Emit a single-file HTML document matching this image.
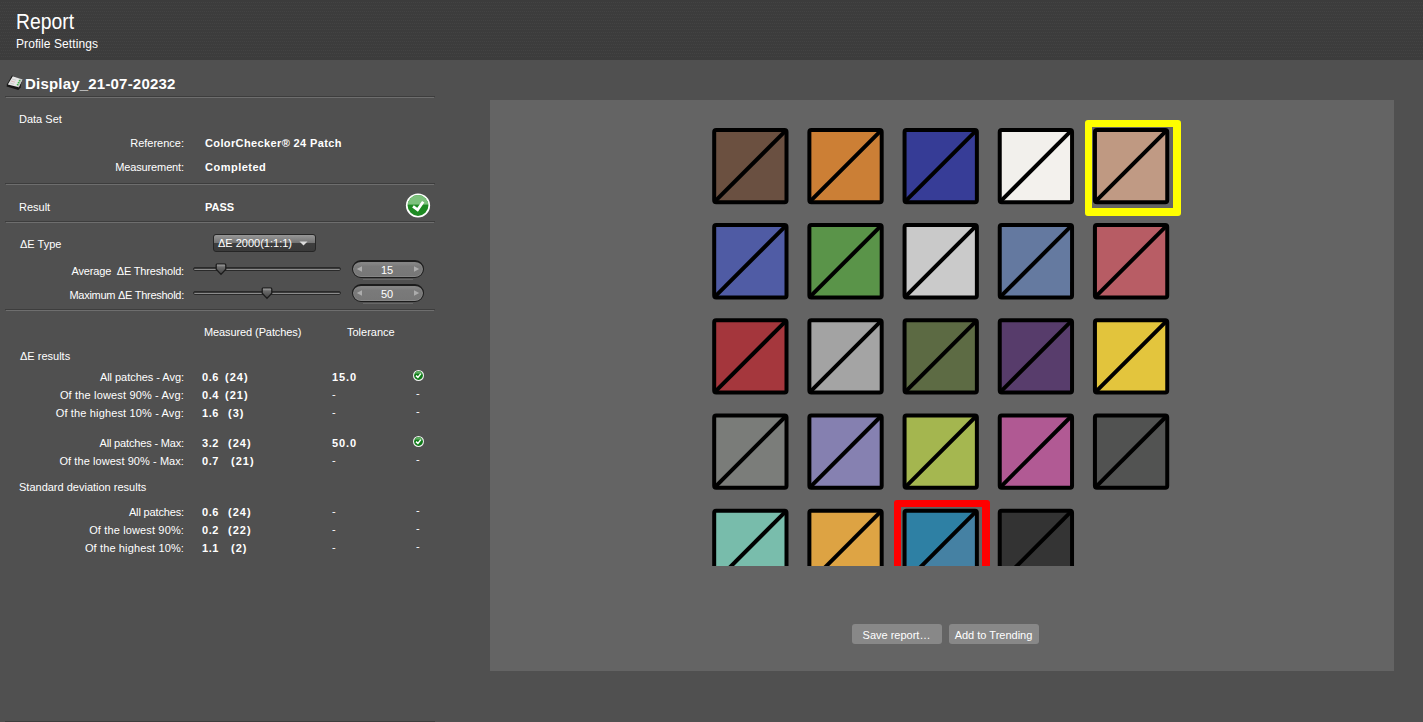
<!DOCTYPE html>
<html><head><meta charset="utf-8"><style>
html,body{margin:0;padding:0;}
body{width:1423px;height:722px;overflow:hidden;background:#505050;position:relative;font-family:"Liberation Sans", sans-serif;color:#ffffff;}
.t{position:absolute;white-space:nowrap;}
.r{position:absolute;box-sizing:border-box;}
div.r{box-sizing:content-box;}
</style></head><body>
<div class="r" style="left:0px;top:0px;width:1423px;height:60px;background:#3c3c3c"></div>
<svg class="r" style="left:0;top:0" width="1423" height="60"><defs><pattern id="hp" x="0" y="0" width="2" height="6" patternUnits="userSpaceOnUse"><rect x="1" y="2" width="1" height="1" fill="#434343"/><rect x="0" y="5" width="1" height="1" fill="#434343"/></pattern></defs><rect width="1423" height="59" fill="url(#hp)"/></svg>
<div class="t" style="top:11px;font-size:22px;line-height:22px;left:16px;transform:scaleX(0.88);transform-origin:0 0;">Report</div>
<div class="t" style="top:38px;font-size:12px;line-height:12px;letter-spacing:0.08px;left:16px;">Profile Settings</div>
<div class="r" style="left:5px;top:96px;width:430px;height:1px;background:#3d3d3d"></div>
<div class="r" style="left:6px;top:97px;width:428px;height:1px;background:#6e6e6e"></div>
<div class="r" style="left:5px;top:183px;width:430px;height:1px;background:#3d3d3d"></div>
<div class="r" style="left:6px;top:184px;width:428px;height:1px;background:#6e6e6e"></div>
<div class="r" style="left:5px;top:221px;width:430px;height:1px;background:#3d3d3d"></div>
<div class="r" style="left:6px;top:222px;width:428px;height:1px;background:#6e6e6e"></div>
<div class="r" style="left:5px;top:309px;width:430px;height:1px;background:#3d3d3d"></div>
<div class="r" style="left:6px;top:310px;width:428px;height:1px;background:#6e6e6e"></div>
<div class="r" style="left:5px;top:721px;width:430px;height:1px;background:#3d3d3d"></div>
<svg class="r" style="left:3px;top:70px" width="24" height="24" viewBox="0 0 24 24">
<polygon points="9,5.6 4,14.2 3.6,16.6 15.4,20 17.6,17.2 18.8,10" fill="#0c0c0c" opacity="0.85"/>
<polygon points="9.8,6.2 19.4,9.4 15.8,17.2 4.8,14.6" fill="#e6e6e6"/>
<polygon points="17.6,8.8 19.4,9.4 15.8,17.2 14.2,16.8" fill="#c4c4c4"/>
<line x1="9" y1="9" x2="13" y2="10.2" stroke="#bbb" stroke-width="0.6"/>
<line x1="8" y1="11" x2="12" y2="12.2" stroke="#d9a0a0" stroke-width="0.6"/>
<line x1="7" y1="13" x2="11" y2="14.2" stroke="#bbb" stroke-width="0.6"/>
<circle cx="16.6" cy="10.6" r="0.9" fill="#3fb84a"/><circle cx="15.6" cy="12.6" r="0.9" fill="#3fb84a"/><circle cx="14.6" cy="14.6" r="0.9" fill="#3fb84a"/>
</svg>
<div class="t" style="top:76px;font-size:15px;line-height:15px;font-weight:bold;letter-spacing:0.2px;left:25px;">Display_21-07-20232</div>
<div class="t" style="top:114px;font-size:11px;line-height:11px;left:19px;">Data Set</div>
<div class="t" style="top:138px;font-size:11px;line-height:11px;right:1239px;text-align:right;">Reference:</div>
<div class="t" style="top:138px;font-size:11px;line-height:11px;font-weight:bold;letter-spacing:0.38px;left:205px;">ColorChecker® 24 Patch</div>
<div class="t" style="top:162px;font-size:11px;line-height:11px;letter-spacing:-0.12px;right:1239px;text-align:right;">Measurement:</div>
<div class="t" style="top:162px;font-size:11px;line-height:11px;font-weight:bold;letter-spacing:0.5px;left:205px;">Completed</div>
<div class="t" style="top:202px;font-size:11px;line-height:11px;left:19px;">Result</div>
<div class="t" style="top:202px;font-size:11px;line-height:11px;font-weight:bold;left:205px;">PASS</div>
<svg class="r" style="left:405px;top:192px" width="27" height="27" viewBox="0 0 27 27">
<circle cx="13" cy="13.5" r="12.1" fill="#fff"/>
<clipPath id="cc"><circle cx="13" cy="13.5" r="10.4"/></clipPath>
<g clip-path="url(#cc)"><rect x="0" y="0" width="27" height="27" fill="#1e8a23"/><rect x="0" y="0" width="27" height="12.6" fill="#7cc17c"/></g>
<polyline points="8,14.4 12.6,17.8 18.2,9.8" fill="none" stroke="#fff" stroke-width="2.8" stroke-linejoin="miter"/>
</svg>
<div class="t" style="top:239px;font-size:11px;line-height:11px;left:20px;">ΔE Type</div>
<div class="r" style="left:213px;top:234px;width:101px;height:16px;border:1px solid #262626;border-radius:3px;background:linear-gradient(#979797 0%,#727272 50%,#3e3e3e 50%,#3a3a3a 100%)"></div>
<div class="t" style="top:238px;font-size:11px;line-height:11px;left:218px;">ΔE 2000(1:1:1)</div>
<svg class="r" style="left:299px;top:241px" width="10" height="6"><polygon points="0.5,0.5 8.5,0.5 4.5,4.5" fill="#dcdcdc"/></svg>
<div class="t" style="top:266px;font-size:11px;line-height:11px;letter-spacing:-0.18px;right:1239px;text-align:right;">Average&nbsp; ΔE Threshold:</div>
<div class="t" style="top:290px;font-size:11px;line-height:11px;letter-spacing:-0.27px;right:1239px;text-align:right;">Maximum ΔE Threshold:</div>
<svg class="r" style="left:192px;top:266px" width="151" height="6"><defs><linearGradient id="tg15" x1="0" y1="0" x2="0" y2="1"><stop offset="0" stop-color="#3a3a3a"/><stop offset="0.45" stop-color="#3a3a3a"/><stop offset="0.55" stop-color="#8c8c8c"/><stop offset="1" stop-color="#8c8c8c"/></linearGradient></defs><rect x="1.5" y="1.5" width="147" height="3" rx="1.5" fill="url(#tg15)" stroke="#2a2a2a" stroke-width="1"/></svg>
<svg class="r" style="left:214.5px;top:263px" width="12" height="13" viewBox="0 0 12 13">
<defs><linearGradient id="g15" x1="0" y1="0" x2="0" y2="1"><stop offset="0" stop-color="#b4b4b4"/><stop offset="0.3" stop-color="#6a6a6a"/><stop offset="1" stop-color="#404040"/></linearGradient></defs>
<path d="M1.2,2.2 Q1.2,0.8 2.6,0.8 L9.4,0.8 Q10.8,0.8 10.8,2.2 L10.8,6.3 L6,11.4 L1.2,6.3 Z" fill="url(#g15)" stroke="#1c1c1c" stroke-width="1.3"/></svg>
<div class="r" style="left:352px;top:260px;width:70px;height:15px;border:1px solid #1c1c1c;border-top-width:2px;border-radius:9px;background:linear-gradient(#8a8a8a,#7a7a7a 30%,#777 100%);box-shadow:inset 0 0 0 1px #858585"></div>
<div class="r" style="left:363px;top:279px;width:50px;height:1px;background:#686868"></div>
<svg class="r" style="left:356px;top:266px" width="7" height="8"><polygon points="0.8,3 6,0.2 6,5.8" fill="#acacac"/></svg>
<svg class="r" style="left:413px;top:266px" width="7" height="8"><polygon points="6.2,3 1,0.2 1,5.8" fill="#acacac"/></svg>
<div class="t" style="top:265px;font-size:11px;line-height:11px;left:187px;width:400px;text-align:center;">15</div>
<svg class="r" style="left:192px;top:290px" width="151" height="6"><defs><linearGradient id="tg50" x1="0" y1="0" x2="0" y2="1"><stop offset="0" stop-color="#3a3a3a"/><stop offset="0.45" stop-color="#3a3a3a"/><stop offset="0.55" stop-color="#8c8c8c"/><stop offset="1" stop-color="#8c8c8c"/></linearGradient></defs><rect x="1.5" y="1.5" width="147" height="3" rx="1.5" fill="url(#tg50)" stroke="#2a2a2a" stroke-width="1"/></svg>
<svg class="r" style="left:260.5px;top:287px" width="12" height="13" viewBox="0 0 12 13">
<defs><linearGradient id="g50" x1="0" y1="0" x2="0" y2="1"><stop offset="0" stop-color="#b4b4b4"/><stop offset="0.3" stop-color="#6a6a6a"/><stop offset="1" stop-color="#404040"/></linearGradient></defs>
<path d="M1.2,2.2 Q1.2,0.8 2.6,0.8 L9.4,0.8 Q10.8,0.8 10.8,2.2 L10.8,6.3 L6,11.4 L1.2,6.3 Z" fill="url(#g50)" stroke="#1c1c1c" stroke-width="1.3"/></svg>
<div class="r" style="left:352px;top:284px;width:70px;height:15px;border:1px solid #1c1c1c;border-top-width:2px;border-radius:9px;background:linear-gradient(#8a8a8a,#7a7a7a 30%,#777 100%);box-shadow:inset 0 0 0 1px #858585"></div>
<div class="r" style="left:363px;top:303px;width:50px;height:1px;background:#686868"></div>
<svg class="r" style="left:356px;top:290px" width="7" height="8"><polygon points="0.8,3 6,0.2 6,5.8" fill="#acacac"/></svg>
<svg class="r" style="left:413px;top:290px" width="7" height="8"><polygon points="6.2,3 1,0.2 1,5.8" fill="#acacac"/></svg>
<div class="t" style="top:289px;font-size:11px;line-height:11px;left:187px;width:400px;text-align:center;">50</div>
<div class="t" style="top:327px;font-size:11px;line-height:11px;letter-spacing:-0.1px;left:204px;">Measured (Patches)</div>
<div class="t" style="top:327px;font-size:11px;line-height:11px;left:347px;">Tolerance</div>
<div class="t" style="top:351px;font-size:11px;line-height:11px;left:20px;">ΔE results</div>
<div class="t" style="top:372px;font-size:11px;line-height:11px;letter-spacing:-0.04px;right:1239px;text-align:right;">All patches - Avg:</div>
<div class="t" style="top:372px;font-size:11px;line-height:11px;font-weight:bold;letter-spacing:0.6px;left:202px;">0.6</div>
<div class="t" style="top:372px;font-size:11px;line-height:11px;font-weight:bold;letter-spacing:1.0px;left:225px;">(24)</div>
<div class="t" style="top:372px;font-size:11px;line-height:11px;font-weight:bold;letter-spacing:0.9px;left:332px;">15.0</div>
<svg class="r" style="left:412.0px;top:368.5px" width="13" height="13" viewBox="0 0 13 13">
<circle cx="6.5" cy="6.5" r="5.5" fill="#f0f0f0"/>
<clipPath id="sc375"><circle cx="6.5" cy="6.5" r="4.4"/></clipPath>
<g clip-path="url(#sc375)"><rect width="13" height="13" fill="#0f7a18"/><rect width="13" height="4.6" fill="#5fae62"/></g>
<polyline points="4,6.6 5.9,8.4 8.9,4.6" fill="none" stroke="#fff" stroke-width="1.5"/></svg>
<div class="t" style="top:390px;font-size:11px;line-height:11px;letter-spacing:0.16px;right:1239px;text-align:right;">Of the lowest 90% - Avg:</div>
<div class="t" style="top:390px;font-size:11px;line-height:11px;font-weight:bold;letter-spacing:0.6px;left:202px;">0.4</div>
<div class="t" style="top:390px;font-size:11px;line-height:11px;font-weight:bold;letter-spacing:1.0px;left:225px;">(21)</div>
<div class="t" style="top:389px;font-size:11px;line-height:11px;left:332px;">-</div>
<div class="t" style="top:388px;font-size:11px;line-height:11px;left:416px;">-</div>
<div class="t" style="top:408px;font-size:11px;line-height:11px;letter-spacing:0.15px;right:1239px;text-align:right;">Of the highest 10% - Avg:</div>
<div class="t" style="top:408px;font-size:11px;line-height:11px;font-weight:bold;letter-spacing:0.6px;left:202px;">1.6</div>
<div class="t" style="top:408px;font-size:11px;line-height:11px;font-weight:bold;letter-spacing:1.0px;left:228px;">(3)</div>
<div class="t" style="top:407px;font-size:11px;line-height:11px;left:332px;">-</div>
<div class="t" style="top:406px;font-size:11px;line-height:11px;left:416px;">-</div>
<div class="t" style="top:438px;font-size:11px;line-height:11px;letter-spacing:-0.16px;right:1239px;text-align:right;">All patches - Max:</div>
<div class="t" style="top:438px;font-size:11px;line-height:11px;font-weight:bold;letter-spacing:0.6px;left:202px;">3.2</div>
<div class="t" style="top:438px;font-size:11px;line-height:11px;font-weight:bold;letter-spacing:1.0px;left:228px;">(24)</div>
<div class="t" style="top:438px;font-size:11px;line-height:11px;font-weight:bold;letter-spacing:0.9px;left:332px;">50.0</div>
<svg class="r" style="left:412.0px;top:434.5px" width="13" height="13" viewBox="0 0 13 13">
<circle cx="6.5" cy="6.5" r="5.5" fill="#f0f0f0"/>
<clipPath id="sc441"><circle cx="6.5" cy="6.5" r="4.4"/></clipPath>
<g clip-path="url(#sc441)"><rect width="13" height="13" fill="#0f7a18"/><rect width="13" height="4.6" fill="#5fae62"/></g>
<polyline points="4,6.6 5.9,8.4 8.9,4.6" fill="none" stroke="#fff" stroke-width="1.5"/></svg>
<div class="t" style="top:456px;font-size:11px;line-height:11px;letter-spacing:0.07px;right:1239px;text-align:right;">Of the lowest 90% - Max:</div>
<div class="t" style="top:456px;font-size:11px;line-height:11px;font-weight:bold;letter-spacing:0.6px;left:202px;">0.7</div>
<div class="t" style="top:456px;font-size:11px;line-height:11px;font-weight:bold;letter-spacing:1.0px;left:231px;">(21)</div>
<div class="t" style="top:455px;font-size:11px;line-height:11px;left:332px;">-</div>
<div class="t" style="top:454px;font-size:11px;line-height:11px;left:416px;">-</div>
<div class="t" style="top:507px;font-size:11px;line-height:11px;letter-spacing:-0.15px;right:1239px;text-align:right;">All patches:</div>
<div class="t" style="top:507px;font-size:11px;line-height:11px;font-weight:bold;letter-spacing:0.6px;left:202px;">0.6</div>
<div class="t" style="top:507px;font-size:11px;line-height:11px;font-weight:bold;letter-spacing:1.0px;left:228px;">(24)</div>
<div class="t" style="top:506px;font-size:11px;line-height:11px;left:332px;">-</div>
<div class="t" style="top:505px;font-size:11px;line-height:11px;left:416px;">-</div>
<div class="t" style="top:525px;font-size:11px;line-height:11px;letter-spacing:0.14px;right:1239px;text-align:right;">Of the lowest 90%:</div>
<div class="t" style="top:525px;font-size:11px;line-height:11px;font-weight:bold;letter-spacing:0.6px;left:202px;">0.2</div>
<div class="t" style="top:525px;font-size:11px;line-height:11px;font-weight:bold;letter-spacing:1.0px;left:228px;">(22)</div>
<div class="t" style="top:524px;font-size:11px;line-height:11px;left:332px;">-</div>
<div class="t" style="top:523px;font-size:11px;line-height:11px;left:416px;">-</div>
<div class="t" style="top:543px;font-size:11px;line-height:11px;letter-spacing:0.13px;right:1239px;text-align:right;">Of the highest 10%:</div>
<div class="t" style="top:543px;font-size:11px;line-height:11px;font-weight:bold;letter-spacing:0.6px;left:202px;">1.1</div>
<div class="t" style="top:543px;font-size:11px;line-height:11px;font-weight:bold;letter-spacing:1.0px;left:231px;">(2)</div>
<div class="t" style="top:542px;font-size:11px;line-height:11px;left:332px;">-</div>
<div class="t" style="top:541px;font-size:11px;line-height:11px;left:416px;">-</div>
<div class="t" style="top:482px;font-size:11px;line-height:11px;left:19px;">Standard deviation results</div>
<div class="r" style="left:490px;top:100px;width:904px;height:571px;background:#646464"></div>
<svg class="r" style="left:490px;top:100px" width="904" height="571" viewBox="490 100 904 571"><defs><clipPath id="pc"><rect x="490" y="100" width="904" height="466"/></clipPath></defs><g clip-path="url(#pc)"><rect x="714.20" y="129.90" width="72.30" height="72.30" rx="2" fill="#000" stroke="#000" stroke-width="4"/><polygon points="716.20,131.90 784.50,131.90 716.20,200.20" fill="#6b5040"/><polygon points="784.50,131.90 784.50,200.20 716.20,200.20" fill="#6a5041"/><line x1="715.20" y1="201.20" x2="785.50" y2="130.90" stroke="#000" stroke-width="4"/><rect x="809.38" y="129.90" width="72.30" height="72.30" rx="2" fill="#000" stroke="#000" stroke-width="4"/><polygon points="811.38,131.90 879.68,131.90 811.38,200.20" fill="#cc7f35"/><polygon points="879.68,131.90 879.68,200.20 811.38,200.20" fill="#cb7f36"/><line x1="810.38" y1="201.20" x2="880.68" y2="130.90" stroke="#000" stroke-width="4"/><rect x="904.56" y="129.90" width="72.30" height="72.30" rx="2" fill="#000" stroke="#000" stroke-width="4"/><polygon points="906.56,131.90 974.86,131.90 906.56,200.20" fill="#363c96"/><polygon points="974.86,131.90 974.86,200.20 906.56,200.20" fill="#373d97"/><line x1="905.56" y1="201.20" x2="975.86" y2="130.90" stroke="#000" stroke-width="4"/><rect x="999.74" y="129.90" width="72.30" height="72.30" rx="2" fill="#000" stroke="#000" stroke-width="4"/><polygon points="1001.74,131.90 1070.04,131.90 1001.74,200.20" fill="#f2f0ec"/><polygon points="1070.04,131.90 1070.04,200.20 1001.74,200.20" fill="#f3f1ed"/><line x1="1000.74" y1="201.20" x2="1071.04" y2="130.90" stroke="#000" stroke-width="4"/><rect x="1094.92" y="129.90" width="72.30" height="72.30" rx="2" fill="#000" stroke="#000" stroke-width="4"/><polygon points="1096.92,131.90 1165.22,131.90 1096.92,200.20" fill="#bf9982"/><polygon points="1165.22,131.90 1165.22,200.20 1096.92,200.20" fill="#c09a84"/><line x1="1095.92" y1="201.20" x2="1166.22" y2="130.90" stroke="#000" stroke-width="4"/><rect x="714.20" y="225.10" width="72.30" height="72.30" rx="2" fill="#000" stroke="#000" stroke-width="4"/><polygon points="716.20,227.10 784.50,227.10 716.20,295.40" fill="#4f5ba4"/><polygon points="784.50,227.10 784.50,295.40 716.20,295.40" fill="#505ca5"/><line x1="715.20" y1="296.40" x2="785.50" y2="226.10" stroke="#000" stroke-width="4"/><rect x="809.38" y="225.10" width="72.30" height="72.30" rx="2" fill="#000" stroke="#000" stroke-width="4"/><polygon points="811.38,227.10 879.68,227.10 811.38,295.40" fill="#5a9449"/><polygon points="879.68,227.10 879.68,295.40 811.38,295.40" fill="#5a9449"/><line x1="810.38" y1="296.40" x2="880.68" y2="226.10" stroke="#000" stroke-width="4"/><rect x="904.56" y="225.10" width="72.30" height="72.30" rx="2" fill="#000" stroke="#000" stroke-width="4"/><polygon points="906.56,227.10 974.86,227.10 906.56,295.40" fill="#c9c9c9"/><polygon points="974.86,227.10 974.86,295.40 906.56,295.40" fill="#cacaca"/><line x1="905.56" y1="296.40" x2="975.86" y2="226.10" stroke="#000" stroke-width="4"/><rect x="999.74" y="225.10" width="72.30" height="72.30" rx="2" fill="#000" stroke="#000" stroke-width="4"/><polygon points="1001.74,227.10 1070.04,227.10 1001.74,295.40" fill="#6479a0"/><polygon points="1070.04,227.10 1070.04,295.40 1001.74,295.40" fill="#657aa0"/><line x1="1000.74" y1="296.40" x2="1071.04" y2="226.10" stroke="#000" stroke-width="4"/><rect x="1094.92" y="225.10" width="72.30" height="72.30" rx="2" fill="#000" stroke="#000" stroke-width="4"/><polygon points="1096.92,227.10 1165.22,227.10 1096.92,295.40" fill="#b75c64"/><polygon points="1165.22,227.10 1165.22,295.40 1096.92,295.40" fill="#b85d65"/><line x1="1095.92" y1="296.40" x2="1166.22" y2="226.10" stroke="#000" stroke-width="4"/><rect x="714.20" y="320.30" width="72.30" height="72.30" rx="2" fill="#000" stroke="#000" stroke-width="4"/><polygon points="716.20,322.30 784.50,322.30 716.20,390.60" fill="#a4363c"/><polygon points="784.50,322.30 784.50,390.60 716.20,390.60" fill="#a5373d"/><line x1="715.20" y1="391.60" x2="785.50" y2="321.30" stroke="#000" stroke-width="4"/><rect x="809.38" y="320.30" width="72.30" height="72.30" rx="2" fill="#000" stroke="#000" stroke-width="4"/><polygon points="811.38,322.30 879.68,322.30 811.38,390.60" fill="#a3a3a3"/><polygon points="879.68,322.30 879.68,390.60 811.38,390.60" fill="#a4a4a4"/><line x1="810.38" y1="391.60" x2="880.68" y2="321.30" stroke="#000" stroke-width="4"/><rect x="904.56" y="320.30" width="72.30" height="72.30" rx="2" fill="#000" stroke="#000" stroke-width="4"/><polygon points="906.56,322.30 974.86,322.30 906.56,390.60" fill="#5c6a43"/><polygon points="974.86,322.30 974.86,390.60 906.56,390.60" fill="#5d6b44"/><line x1="905.56" y1="391.60" x2="975.86" y2="321.30" stroke="#000" stroke-width="4"/><rect x="999.74" y="320.30" width="72.30" height="72.30" rx="2" fill="#000" stroke="#000" stroke-width="4"/><polygon points="1001.74,322.30 1070.04,322.30 1001.74,390.60" fill="#573c6b"/><polygon points="1070.04,322.30 1070.04,390.60 1001.74,390.60" fill="#583d6c"/><line x1="1000.74" y1="391.60" x2="1071.04" y2="321.30" stroke="#000" stroke-width="4"/><rect x="1094.92" y="320.30" width="72.30" height="72.30" rx="2" fill="#000" stroke="#000" stroke-width="4"/><polygon points="1096.92,322.30 1165.22,322.30 1096.92,390.60" fill="#e2c43c"/><polygon points="1165.22,322.30 1165.22,390.60 1096.92,390.60" fill="#e3c53d"/><line x1="1095.92" y1="391.60" x2="1166.22" y2="321.30" stroke="#000" stroke-width="4"/><rect x="714.20" y="415.50" width="72.30" height="72.30" rx="2" fill="#000" stroke="#000" stroke-width="4"/><polygon points="716.20,417.50 784.50,417.50 716.20,485.80" fill="#7a7c79"/><polygon points="784.50,417.50 784.50,485.80 716.20,485.80" fill="#7b7d7a"/><line x1="715.20" y1="486.80" x2="785.50" y2="416.50" stroke="#000" stroke-width="4"/><rect x="809.38" y="415.50" width="72.30" height="72.30" rx="2" fill="#000" stroke="#000" stroke-width="4"/><polygon points="811.38,417.50 879.68,417.50 811.38,485.80" fill="#8580b0"/><polygon points="879.68,417.50 879.68,485.80 811.38,485.80" fill="#8681b1"/><line x1="810.38" y1="486.80" x2="880.68" y2="416.50" stroke="#000" stroke-width="4"/><rect x="904.56" y="415.50" width="72.30" height="72.30" rx="2" fill="#000" stroke="#000" stroke-width="4"/><polygon points="906.56,417.50 974.86,417.50 906.56,485.80" fill="#a4b64f"/><polygon points="974.86,417.50 974.86,485.80 906.56,485.80" fill="#a5b750"/><line x1="905.56" y1="486.80" x2="975.86" y2="416.50" stroke="#000" stroke-width="4"/><rect x="999.74" y="415.50" width="72.30" height="72.30" rx="2" fill="#000" stroke="#000" stroke-width="4"/><polygon points="1001.74,417.50 1070.04,417.50 1001.74,485.80" fill="#b05993"/><polygon points="1070.04,417.50 1070.04,485.80 1001.74,485.80" fill="#b15a94"/><line x1="1000.74" y1="486.80" x2="1071.04" y2="416.50" stroke="#000" stroke-width="4"/><rect x="1094.92" y="415.50" width="72.30" height="72.30" rx="2" fill="#000" stroke="#000" stroke-width="4"/><polygon points="1096.92,417.50 1165.22,417.50 1096.92,485.80" fill="#515251"/><polygon points="1165.22,417.50 1165.22,485.80 1096.92,485.80" fill="#525352"/><line x1="1095.92" y1="486.80" x2="1166.22" y2="416.50" stroke="#000" stroke-width="4"/><rect x="714.20" y="510.70" width="72.30" height="72.30" rx="2" fill="#000" stroke="#000" stroke-width="4"/><polygon points="716.20,512.70 784.50,512.70 716.20,581.00" fill="#78bcab"/><polygon points="784.50,512.70 784.50,581.00 716.20,581.00" fill="#79bdac"/><line x1="715.20" y1="582.00" x2="785.50" y2="511.70" stroke="#000" stroke-width="4"/><rect x="809.38" y="510.70" width="72.30" height="72.30" rx="2" fill="#000" stroke="#000" stroke-width="4"/><polygon points="811.38,512.70 879.68,512.70 811.38,581.00" fill="#dda343"/><polygon points="879.68,512.70 879.68,581.00 811.38,581.00" fill="#dea444"/><line x1="810.38" y1="582.00" x2="880.68" y2="511.70" stroke="#000" stroke-width="4"/><rect x="904.56" y="510.70" width="72.30" height="72.30" rx="2" fill="#000" stroke="#000" stroke-width="4"/><polygon points="906.56,512.70 974.86,512.70 906.56,581.00" fill="#2e80a4"/><polygon points="974.86,512.70 974.86,581.00 906.56,581.00" fill="#4581a3"/><line x1="905.56" y1="582.00" x2="975.86" y2="511.70" stroke="#000" stroke-width="4"/><rect x="999.74" y="510.70" width="72.30" height="72.30" rx="2" fill="#000" stroke="#000" stroke-width="4"/><polygon points="1001.74,512.70 1070.04,512.70 1001.74,581.00" fill="#333333"/><polygon points="1070.04,512.70 1070.04,581.00 1001.74,581.00" fill="#343434"/><line x1="1000.74" y1="582.00" x2="1071.04" y2="511.70" stroke="#000" stroke-width="4"/><path fill-rule="evenodd" fill="#ffff00" d="M1088,120 H1178 Q1181,120 1181,123 V213 Q1181,216 1178,216 H1088 Q1085,216 1085,213 V123 Q1085,120 1088,120 Z M1092,127 V208 H1173 V127 Z"/><path fill-rule="evenodd" fill="#ff0000" d="M897,500 H987 Q990,500 990,503 V593 Q990,596 987,596 H897 Q894,596 894,593 V503 Q894,500 897,500 Z M901,507 V588 H982 V507 Z"/></g></svg>
<div class="r" style="left:852px;top:624px;width:90px;height:20px;background:#888;border-radius:3px"></div>
<div class="r" style="left:949px;top:624px;width:90px;height:20px;background:#888;border-radius:3px"></div>
<div class="t" style="top:630px;font-size:11px;line-height:11px;left:696.5px;width:400px;text-align:center;">Save report…</div>
<div class="t" style="top:630px;font-size:11px;line-height:11px;left:793.5px;width:400px;text-align:center;">Add to Trending</div>
</body></html>
